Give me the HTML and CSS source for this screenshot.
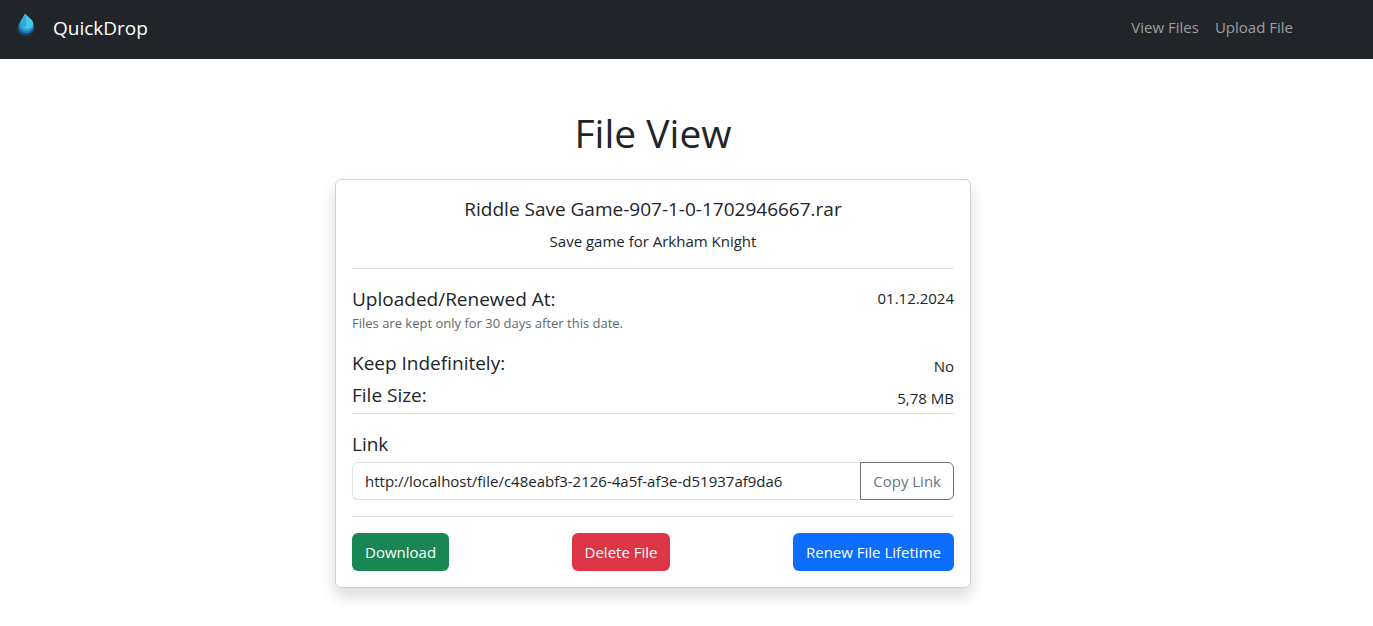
FILE: index.html
```html
<!DOCTYPE html>
<html lang="en">
<head>
<meta charset="utf-8">
<meta name="viewport" content="width=device-width, initial-scale=1">
<title>QuickDrop - File View</title>
<link rel="stylesheet" href="styles.css">
</head>
<body>
<nav class="navbar">
  <a class="brand" href="#">
    <svg class="logo" viewBox="0 0 20 24" aria-hidden="true">
      <path d="M10 5C7 8 .6 11 .6 16.200a9.400 7.800 0 0 0 18.800 0C19.400 12 14 9 10 5Z" fill="#173d58"/>
      <path d="M9.500 2C7 6 2.500 9.500 2.500 14a7.800 7 0 0 0 16.200 0C18.700 9.500 13 6 9.500 2Z" fill="#2172a8"/>
      <path d="M9.500 1C7.500 4.500 3.700 8 3.700 12a6.900 6.500 0 0 0 14.600 0C18.300 8 12 5 9.500 1Z" fill="#2d9ad2"/>
      <path d="M9.500 0C8 4 5.200 6.800 5.200 10.200a6.400 5.700 0 0 0 13 0C18.200 6.500 12.500 4 9.500 0Z" fill="#42c9ee"/>
      <path d="M9.500 0C8 4 5.200 6.800 5.200 10.200a5 4.500 0 0 0 4.800 4.800c1.500-4 1-10-.5-15Z" fill="#35a9d8"/>
    </svg>
    <span>QuickDrop</span>
  </a>
  <div class="nav-links">
    <a class="nav-link" href="#">View Files</a>
    <a class="nav-link" href="#">Upload File</a>
  </div>
</nav>
<main class="page">
  <h1 class="page-title">File View</h1>
  <section class="card">
    <header class="card-head">
      <h2 class="heading">Riddle Save Game-907-1-0-1702946667.rar</h2>
      <p class="description">Save game for Arkham Knight</p>
    </header>
    <div class="details">
      <div class="row">
        <div>
          <h2 class="heading">Uploaded/Renewed At:</h2>
          <p class="note">Files are kept only for 30 days after this date.</p>
        </div>
        <p class="value">01.12.2024</p>
      </div>
      <div class="row row-low">
        <h2 class="heading">Keep Indefinitely:</h2>
        <p class="value">No</p>
      </div>
      <div class="row row-low">
        <h2 class="heading">File Size:</h2>
        <p class="value">5,78 MB</p>
      </div>
    </div>
    <div class="link-section">
      <label class="heading" for="link">Link</label>
      <div class="input-group">
        <input class="link-input" id="link" type="text" readonly value="http://localhost/file/c48eabf3-2126-4a5f-af3e-d51937af9da6">
        <button class="btn btn-outline" type="button">Copy Link</button>
      </div>
    </div>
    <div class="actions">
      <button class="btn btn-success" type="button">Download</button>
      <button class="btn btn-danger" type="button">Delete File</button>
      <button class="btn btn-primary" type="button">Renew File Lifetime</button>
    </div>
  </section>
</main>
</body>
</html>
```
FILE: styles.css
```css
* { box-sizing: border-box; }
body {
  margin: 0;
  background: #fff;
  color: #212529;
  font-family: "Segoe UI", "Open Sans", "Noto Sans", sans-serif;
  font-size: 15px;
  line-height: 24px;
}
h1, h2, p { margin: 0; font-weight: 400; }
.navbar {
  display: flex;
  justify-content: space-between;
  align-items: center;
  min-height: 59px;
  padding: 0 80px 4px 16px;
  background: #212529;
}
.brand {
  display: flex;
  align-items: center;
  gap: 18px;
  color: #fff;
  font-size: 19px;
  text-decoration: none;
}
.logo { width: 19px; height: 24px; margin-bottom: 6px; }
.nav-links { display: flex; gap: 16px; padding-bottom: 2px; }
.nav-link { color: #9b9d9e; text-decoration: none; }
.page {
  padding: 50px 67px 38px 0;
}
.page-title {
  margin-bottom: 22px;
  font-size: 39px;
  line-height: 48px;
  text-align: center;
}
.card {
  max-width: 636px;
  margin: 0 auto;
  padding: 16px;
  border: 1px solid #d0d1d2;
  border-radius: 6px;
  background: #fff;
  box-shadow: 0 8px 16px rgba(0, 0, 0, .15);
}
.card-head {
  display: grid;
  gap: 7px;
  padding-bottom: 15px;
  text-align: center;
}
.heading {
  font-size: 19px;
  line-height: 26px;
}
.details {
  display: grid;
  gap: 6px;
  padding: 17px 0 5px;
  border-top: 1px solid #dee0e2;
  border-bottom: 1px solid #dee0e2;
}
.row {
  display: flex;
  justify-content: space-between;
}
.row-low { align-items: flex-end; }
.row-low .value { line-height: 20px; }
.note {
  margin-bottom: 10px;
  color: #63686c;
  font-size: 13px;
  line-height: 22px;
}
.link-section {
  display: grid;
  gap: 5px;
  padding: 17px 0 16px;
  border-bottom: 1px solid #dee0e2;
}
.input-group { display: flex; }
.link-input {
  flex: 1;
  min-width: 0;
  padding: 6px 12px;
  border: 1px solid #dee2e6;
  border-right: 0;
  border-radius: 6px 0 0 6px;
  background: #fff;
  color: #212529;
  font: inherit;
}
.btn {
  padding: 6px 12px;
  border: 1px solid transparent;
  border-radius: 6px;
  color: #fff;
  font: inherit;
  cursor: pointer;
}
.btn-outline {
  border-color: #6c757d;
  border-radius: 0 6px 6px 0;
  background: #fff;
  color: #6c757d;
}
.btn-success { background: #198754; }
.btn-danger { background: #dc3545; }
.btn-primary { background: #0d6efd; }
.actions {
  display: flex;
  justify-content: space-between;
  padding-top: 16px;
}
```
